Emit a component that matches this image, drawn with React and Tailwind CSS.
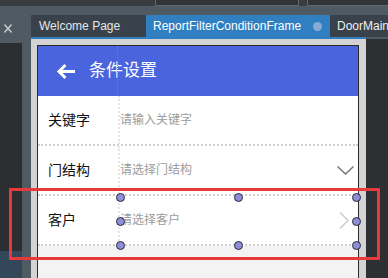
import React from 'react';

const handles = [
  [120, 197], [120, 221], [120, 245],
  [238, 197], [238, 245],
  [356, 197], [356, 221], [356, 245],
];

const Row = ({ label, placeholder, children }) => (
  <div className="h-[50px] flex items-stretch bg-white border-b-2 border-dotted border-[#cfcfcf]">
    <div className="w-[80px] shrink-0 pl-[10px] flex items-center text-[14px] text-[#111]">{label}</div>
    <div className="flex-1 flex items-center justify-between border-l-2 border-dotted border-[#e4e4e4] text-[12px] text-[#9c9c9c]">
      <span>{placeholder}</span>
      {children}
    </div>
  </div>
);

export default function App() {
  return (
    <div
      className="w-[388px] h-[278px] overflow-hidden bg-[#4f5a63] flex flex-col relative"
      style={{ fontFamily: '"Liberation Sans", "Noto Sans CJK SC", sans-serif' }}
    >
      {/* top toolbar strip */}
      <div className="h-[6px] bg-[#383d42] flex shrink-0">
        <div className="w-[155px] shrink-0" />
        <div className="w-[144px] shrink-0 border-x border-b border-[#61686e] bg-[#30353a]" />
        <div className="w-[8px] shrink-0" />
        <div className="flex-1 border-l border-b border-[#61686e] bg-[#30353a]" />
      </div>

      <div className="flex flex-1 min-h-0 pt-[9px]">
        {/* left side panel */}
        <div className="w-[22px] shrink-0 flex flex-col">
          <div className="h-[28px] shrink-0 pt-[9px] pl-[4px]">
            <svg width="8" height="9" viewBox="0 0 8 9">
              <path d="M0.5 0.5 L7.5 8.5 M7.5 0.5 L0.5 8.5" stroke="#cfd3d6" strokeWidth="1.2" fill="none" />
            </svg>
          </div>
          <div className="flex-1 bg-[#2c2e32]" />
          <div className="h-[27px] shrink-0 bg-[#33475a]" />
        </div>
        <div className="w-[9px] shrink-0" />

        <div className="flex-1 min-w-0 flex flex-col">
          {/* tabs */}
          <div className="h-[22px] shrink-0 flex text-[12px]">
            <div className="w-[115px] shrink-0 bg-[#39424a] text-[#e3e6e9] pl-[8px] flex items-center">Welcome Page</div>
            <div className="w-[184px] shrink-0 bg-[#2f7fc1] text-white pl-[7px] pr-[8px] flex items-center justify-between">
              <span>ReportFilterConditionFrame</span>
              <span className="w-[9px] h-[9px] rounded-full bg-[#86acd3]" />
            </div>
            <div className="flex-1 min-w-0 bg-[#39424a] text-[#f0f0f0] pl-[7px] flex items-center whitespace-nowrap overflow-hidden">DoorMain</div>
          </div>
          <div className="h-[2px] w-[335px] shrink-0 bg-[#2f7fc1]" />

          <div className="flex flex-1 min-h-0">
            <div className="w-[335px] shrink-0 bg-[#d3d3d3] pl-[6px] pt-[6px]">
              {/* phone frame */}
              <div className="w-[322px] h-full border border-b-0 border-[#2b2b2b] bg-[#f3f3f3] flex flex-col">
                <div className="h-[50px] shrink-0 bg-[#4a64de] flex items-center relative">
                  <div className="absolute left-[79px] top-0 bottom-0 border-l border-dotted border-[#6479e2]" />
                  <svg className="ml-[18px]" width="20" height="17" viewBox="0 0 20 17">
                    <path d="M19 8.5 H3 M9.5 2 L3 8.5 L9.5 15" stroke="#fff" strokeWidth="3" fill="none" />
                  </svg>
                  <span className="ml-[13px] text-[17px] text-white">条件设置</span>
                </div>
                <Row label="关键字" placeholder="请输入关键字" />
                <Row label="门结构" placeholder="请选择门结构">
                  <svg className="mr-[4px]" width="17" height="9" viewBox="0 0 17 9">
                    <path d="M0.5 0.5 L8.5 8 L16.5 0.5" stroke="#777" strokeWidth="1.5" fill="none" />
                  </svg>
                </Row>
                <Row label="客户" placeholder="请选择客户">
                  <svg className="mr-[9px]" width="10" height="17" viewBox="0 0 10 17">
                    <path d="M1 0.5 L9 8.5 L1 16.5" stroke="#cccccc" strokeWidth="1.5" fill="none" />
                  </svg>
                </Row>
              </div>
            </div>
            <div className="flex-1 bg-[#2d2f33]" />
          </div>
        </div>
      </div>

      {/* selection overlay */}
      <div className="absolute left-[9px] top-[188px] w-[371px] h-[72px] border-[3px] border-[#e8393b]" />
      {handles.map(([x, y]) => (
        <div
          key={`${x}-${y}`}
          className="absolute w-[9px] h-[9px] rounded-full border border-[#2a2a3a] bg-[#8f8fd8]"
          style={{ left: x - 4.5, top: y - 4.5 }}
        />
      ))}
    </div>
  );
}
